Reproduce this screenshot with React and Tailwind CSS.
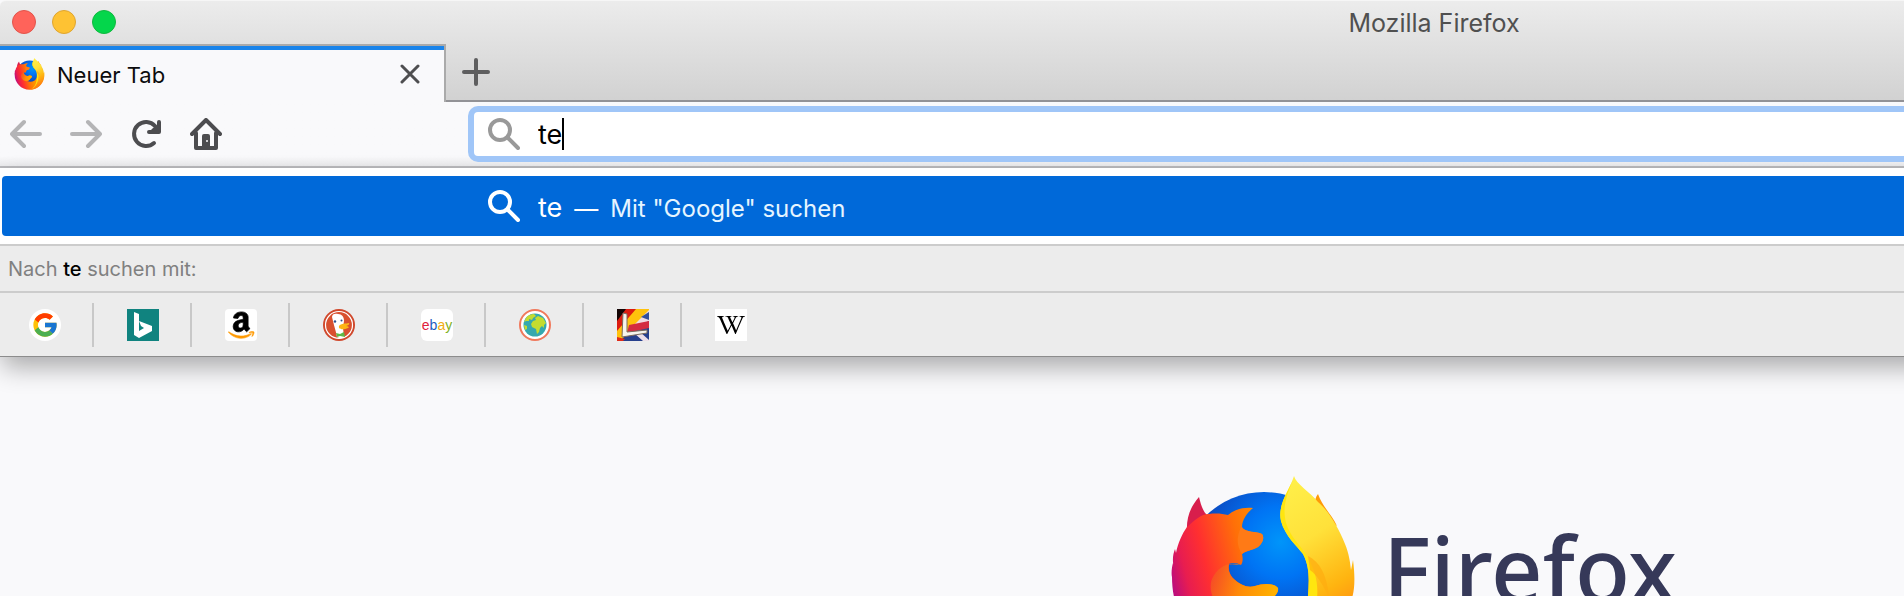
import React, { useState } from "react";
import { FcGoogle } from "react-icons/fc";
import { FaWikipediaW } from "react-icons/fa";

const FirefoxLogo = ({ id, className }) => (
  <svg viewBox="0 0 184 196" className={className} aria-hidden="true">
    <defs>
      <radialGradient id={`${id}-globe`} cx="0.6" cy="0.3" r="0.62">
        <stop offset="0" stopColor="#0095fa" />
        <stop offset="0.35" stopColor="#0074f4" />
        <stop offset="0.7" stopColor="#0a50c8" />
        <stop offset="1" stopColor="#2b2f9e" />
      </radialGradient>
      <linearGradient id={`${id}-fox`} x1="0" y1="0.5" x2="0.6" y2="0.36">
        <stop offset="0" stopColor="#b80c80" />
        <stop offset="0.16" stopColor="#e81d50" />
        <stop offset="0.36" stopColor="#ff2f30" />
        <stop offset="0.7" stopColor="#ff7008" />
        <stop offset="1" stopColor="#ff9500" />
      </linearGradient>
      <linearGradient id={`${id}-tail`} x1="0.3" y1="0" x2="0.6" y2="1">
        <stop offset="0" stopColor="#fff04a" />
        <stop offset="0.35" stopColor="#ffe13a" />
        <stop offset="0.65" stopColor="#ffb410" />
        <stop offset="1" stopColor="#ff6a10" />
      </linearGradient>
      <linearGradient id={`${id}-arm`} x1="0" y1="0" x2="1" y2="0.2">
        <stop offset="0" stopColor="#f4452a" />
        <stop offset="0.5" stopColor="#ff8a08" />
        <stop offset="1" stopColor="#ffb000" />
      </linearGradient>
    </defs>
    <circle cx="93" cy="99" r="83" fill={`url(#${id}-globe)`} />
    <path d="M28 21C20 30 15 41 16 56L37 40C32 36 30 29 28 21Z" fill="#d81e4c" />
    <path d="M147 18C144 22 143 27 144 34L166 50C161 39 151 30 147 18Z" fill="#ff9a08" />
    <path
      d="M16 51C24 44 30 38 38 38C46 37 52 38 57 39C64 33 73 31 82 32C76 37 71 44 71 51C75 57 85 55 91 58C94 62 91 68 87 71C82 74 74 75 71 78C72 82 72 86 70 89C67 87 61 86 58 88C57 95 59 100 64 104C70 109 76 112 84 110C92 107 104 107 107 112C108 118 102 121 98 126C92 135 86 140 78 141C98 151 128 145 137 120L180 115C176 160 138 194 92 194C42 194 1 154 1 101C0 98 1 90 2 87L3 92C1 84 2 78 4 73L5 77C7 67 11 58 16 51Z"
      fill={`url(#${id}-fox)`}
    />
    <path d="M70 51C75 57 85 55 91 58C94 62 91 68 87 71C82 74 74 75 71 78C66 70 65 62 70 51Z" fill="#ff7a16" />
    <path
      d="M70 89C58 85 47 90 41 103C37 113 42 127 53 135C64 143 74 143 80 140C88 138 93 133 98 126C102 121 108 118 107 112C104 107 92 107 84 110C76 112 70 109 64 104C59 100 56 93 58 88Z"
      fill={`url(#${id}-arm)`}
    />
    <path
      d="M123 0C125 8 139 16 147 26C158 35 168 53 174 68C178 78 179 85 180 94L182 84C184 99 184 113 181 122C174 165 136 194 92 194C119 185 137 158 137 120C138 105 139 91 132 78C126 70 114 60 110 45C106 28 120 12 123 0Z"
      fill={`url(#${id}-tail)`}
    />
    <path
      d="M123 0C119 14 110 27 115 47C120 63 131 70 137 82C147 99 150 118 141 145C135 164 121 182 104 192C128 177 137 150 137 120C138 105 139 91 132 78C126 70 114 60 110 45C106 28 120 12 123 0Z"
      fill="#ffe60f"
    />
    <path d="M137 80C149 86 156 99 158 121C152 109 146 99 139 94Z" fill="#ffac10" opacity="0.7" />
  </svg>
);

const SearchIcon = ({ className }) => (
  <svg viewBox="0 0 32 32" className={className} fill="none" stroke="currentColor" strokeWidth="4" strokeLinecap="round" aria-hidden="true">
    <circle cx="12" cy="12" r="10" />
    <path d="M19.500 19.500L30 30" />
  </svg>
);

const BingIcon = () => (
  <svg viewBox="0 0 32 32" className="size-8">
    <path d="M0 0H32V32H0Z" fill="#10837f" />
    <path d="M7 3L12 5V22L17 19L14 17L12 12L25 17V22L12 29L7 26Z" fill="#fff" />
  </svg>
);

const AmazonIcon = () => (
  <svg viewBox="0 0 32 32" className="size-8">
    <rect width="32" height="32" rx="4" fill="#fff" />
    <g transform="translate(3 1) scale(0.059)">
      <path d="M257.200 162.700c-48.700 1.800-169.500 15.500-169.500 117.500 0 109.500 138.300 114 183.500 43.200 6.500 10.200 35.400 37.500 45.300 46.800l56.800-56S341 288.900 341 261.400V114.300C341 89 316.500 32 228.700 32 140.700 32 94 87 94 136.300l73.500 6.800c16.300-49.500 54.200-49.500 54.200-49.500 40.700-.1 35.500 29.800 35.500 69.100zm0 86.800c0 80-84.200 68-84.200 17.200 0-47.200 50.500-56.700 84.200-57.800v40.600z" fill="#000" stroke="#000" strokeWidth="12" />
      <path d="M393.200 413c-7.700 10-70 67-174.500 67S34.200 408.500 9.700 379c-6.800-7.700 1-11.300 5.500-8.300C88.500 415.200 203 488.500 387.700 401c7.500-3.700 13.300 2 5.500 12zm39.800 2.200c-6.500 15.800-16 26.800-21.200 31-5.500 4.500-9.500 2.700-6.500-3.800s19.300-46.500 12.700-55c-6.500-8.300-37-4.300-48-3.200-10.800 1-13 2-14-.3-2.300-5.700 21.700-15.500 37.500-17.500 15.700-1.800 41-.8 46 5.700 3.700 5.100 0 27.100-6.500 43.100z" fill="#f90" stroke="#f90" strokeWidth="10" />
    </g>
  </svg>
);

const DuckIcon = () => (
  <svg viewBox="0 0 32 32" className="size-8">
    <circle cx="16" cy="16" r="16" fill="#d0482c" />
    <circle cx="16" cy="16" r="13.500" fill="#d9502f" stroke="#fff" strokeWidth="1.200" />
    <path d="M9 8C9 5 12 4 15 5C19 5 21 8 21 12L20 19L21 28C18 30 15 29 14 28C13 22 11 17 10 12Z" fill="#fff" />
    <circle cx="12" cy="12.500" r="1.200" fill="#2d4f8e" />
    <circle cx="18.500" cy="11.500" r="1" fill="#2d4f8e" />
    <path d="M16 17C18 14 23 15 26 14C27 15 25 17 22 17C25 17 27 18 25 19C21 21 15 21 16 17Z" fill="#fdb515" />
    <path d="M13 24L17 25L21 23L22 28L17 27L14 28Z" fill="#5fb846" />
  </svg>
);

const EbayIcon = () => (
  <span className="flex size-8 items-center justify-center rounded-md bg-white font-['Liberation_Sans'] text-[14px] leading-none">
    <span className="text-[#e0203a]">e</span>
    <span className="text-[#1c5cc0]">b</span>
    <span className="text-[#f0ac10]">a</span>
    <span className="text-[#7fb020]">y</span>
  </span>
);

const EcosiaIcon = () => (
  <svg viewBox="0 0 32 32" className="size-8">
    <circle cx="16" cy="16" r="15" fill="#fff" stroke="#f0795c" strokeWidth="2" />
    <circle cx="16" cy="16" r="11.500" fill="#36a8ae" />
    <path d="M7 9C9 6 12 5 15 5L17 7L14 9L13 11L10 10L10 12L7 12L5 13Z" fill="#c4dc30" />
    <path d="M5 16L8 17L8 20L6 21Z" fill="#c4dc30" />
    <path d="M12 15L14 12L17 11L16 9L19 7L24 9L27 14L25 16L25 19L23 17L21 19L20 23L18 25L17 20L13 18Z" fill="#c4dc30" />
  </svg>
);

const LeoIcon = () => (
  <svg viewBox="0 0 32 32" className="size-8">
    <path d="M0 0H32V32H0Z" fill="#27408c" />
    <path d="M0 0H18L0 22Z" fill="#140505" />
    <path d="M9 0H24L0 25V12Z" fill="#dc1c10" />
    <path d="M19 0H32V3L3 32H0V22Z" fill="#ffc20c" />
    <path d="M13 20L32 1V12Z" fill="#f1dce2" />
    <path d="M24 8L32 3V11Z" fill="#34509c" />
    <path d="M12 16L32 12V19L10 24Z" fill="#d42c40" />
    <path d="M17 24L23 23L32 31V32H26Z" fill="#ecdfe8" />
    <path d="M0 28L8 30L6 32H0Z" fill="#e02b18" />
    <path d="M6 4L10 5L10 23L30 21V24L5 28Z" fill="#f6f4ec" stroke="#7b6a5c" strokeWidth="1" />
  </svg>
);

const engines = [
  {
    name: "Google",
    icon: (
      <span className="flex size-8 items-center justify-center rounded-full bg-white">
        <FcGoogle size={28} />
      </span>
    ),
  },
  { name: "Bing", icon: <BingIcon /> },
  { name: "Amazon.de", icon: <AmazonIcon /> },
  { name: "DuckDuckGo", icon: <DuckIcon /> },
  { name: "eBay", icon: <EbayIcon /> },
  { name: "Ecosia", icon: <EcosiaIcon /> },
  { name: "LEO Eng-Deu", icon: <LeoIcon /> },
  {
    name: "Wikipedia (de)",
    icon: (
      <span className="flex size-8 items-center justify-center bg-white text-black">
        <FaWikipediaW size={28} />
      </span>
    ),
  },
];

const TitleBar = () => (
  <div className="flex h-11 items-center">
    <div className="flex w-[964px] shrink-0 gap-4 pl-3">
      <button type="button" aria-label="Schließen" className="size-6 rounded-full border border-[#e2544b] bg-[#ff635a]" />
      <button type="button" aria-label="Minimieren" className="size-6 rounded-full border border-[#dfa530] bg-[#fec233]" />
      <button type="button" aria-label="Maximieren" className="size-6 rounded-full border border-[#10b83f] bg-[#04d64b]" />
    </div>
    <h1 className="flex-1 pt-[2px] text-center text-[25px] leading-8 text-[#505050]">Mozilla Firefox</h1>
  </div>
);

const TabBar = () => (
  <div className="flex h-[58px]">
    <div className="flex w-[446px] flex-col border-t-2 border-r-2 border-[#aaaaaa] bg-[#f9f9fb]">
      <div className="h-1 bg-[#1a84ea]" />
      <div className="flex flex-1 items-center pr-6 pb-1 pl-[14px]">
        <FirefoxLogo id="tab" className="h-8 w-[31px]" />
        <span className="ml-3 flex-1 pt-[2px] text-[22px] leading-8 text-[#0c0c0d]">Neuer Tab</span>
        <button type="button" aria-label="Tab schließen" className="text-[#4e4e50]">
          <svg viewBox="0 0 20 20" className="size-5" fill="none" stroke="currentColor" strokeWidth="3" strokeLinecap="round">
            <path d="M2 2L18 18M18 2L2 18" />
          </svg>
        </button>
      </div>
    </div>
    <div className="flex flex-1 items-center border-b-2 border-[#929296] pl-4">
      <button type="button" aria-label="Neuer Tab" className="text-[#5e5e5f]">
        <svg viewBox="0 0 28 28" className="size-7" fill="none" stroke="currentColor" strokeWidth="4" strokeLinecap="round">
          <path d="M14 2V26M2 14H26" />
        </svg>
      </button>
    </div>
  </div>
);

const NavBar = ({ query, setQuery }) => (
  <div className="flex h-[66px] items-center border-b-2 border-[#b9b9bc] bg-linear-to-b from-[#f9f9fb] from-85% to-[#ebebed]">
    <div className="flex w-[468px] shrink-0 items-center gap-7 pl-[10px] text-[#4c4c4f]">
      <button type="button" aria-label="Zurück" disabled className="text-[#b4b4b6]">
        <svg viewBox="0 0 32 32" className="size-8" fill="none" stroke="currentColor" strokeWidth="4" strokeLinecap="round" strokeLinejoin="round">
          <path d="M30 16H2M14 4L2 16L14 28" />
        </svg>
      </button>
      <button type="button" aria-label="Vor" disabled className="text-[#b4b4b6]">
        <svg viewBox="0 0 32 32" className="size-8" fill="none" stroke="currentColor" strokeWidth="4" strokeLinecap="round" strokeLinejoin="round">
          <path d="M2 16H30M18 4L30 16L18 28" />
        </svg>
      </button>
      <button type="button" aria-label="Neu laden">
        <svg viewBox="0 0 32 32" className="size-8" fill="none" stroke="currentColor" strokeWidth="4" strokeLinecap="round" strokeLinejoin="round">
          <path d="M24 25A12 12 0 1 1 25 8" />
          <path d="M29 4V14H19" />
          <path d="M23 10L29 5V14H19Z" fill="currentColor" stroke="none" />
        </svg>
      </button>
      <button type="button" aria-label="Startseite">
        <svg viewBox="0 0 32 32" className="size-8" fill="none" stroke="currentColor" strokeWidth="4" strokeLinecap="round" strokeLinejoin="round">
          <path d="M2 16L16 2L30 16" />
          <path d="M6 15V30H26V15" />
          <path d="M12 30V18Q12 16 14 16H18Q20 16 20 18V30Z" fill="currentColor" stroke="none" />
          <circle cx="17" cy="23" r="1" fill="#f9f9fb" stroke="none" />
        </svg>
      </button>
    </div>
    <label className="flex h-14 flex-1 items-center rounded-l-[10px] border-[6px] border-r-0 border-[#a0c6f8] bg-white pl-[14px]">
      <SearchIcon className="size-8 text-[#999999]" />
      <input
        type="text"
        aria-label="Suchbegriff oder Adresse"
        value={query}
        onChange={(e) => setQuery(e.target.value)}
        className="ml-[18px] field-sizing-content pt-[2px] text-[27px] leading-8 text-black outline-none"
      />
      <span className="h-8 w-[2px] bg-black" />
    </label>
  </div>
);

const Suggestions = ({ query }) => (
  <div className="-mr-10 shadow-[0_12px_24px_-2px_rgba(0,0,0,0.32)]">
    <div className="border-b-2 border-[#cccccc] bg-white py-2 pl-[2px]">
      <button type="button" className="flex h-[60px] w-full items-center rounded-l-[4px] bg-[#0069d9] pl-[486px] text-left text-white">
        <SearchIcon className="size-8 shrink-0" />
        <span className="ml-[18px] flex items-baseline gap-3 pt-1 text-[24px] leading-8">
          <span className="text-[27px]">{query}</span>
          <span>—</span>
          <span className="text-[#e6f5ff]">Mit "Google" suchen</span>
        </span>
      </button>
    </div>
    <div className="border-b-2 border-[#cccccc] bg-[#ececec] px-2 pt-[7px] pb-[6px] text-[20px] leading-8 text-[#808080]">
      Nach <span className="font-medium text-black">{query}</span> suchen mit:
    </div>
    <div className="flex items-center border-b border-[#8c8c8c] bg-[#ececec] pt-[10px] pb-[9px]">
      {engines.map((engine, i) => (
        <button
          key={engine.name}
          type="button"
          aria-label={engine.name}
          className={
            i === 0
              ? "flex h-11 w-[94px] items-center border-r-2 border-[#c8c8c8] pl-[29px]"
              : i === engines.length - 1
              ? "flex h-11 w-[98px] items-center pl-[33px]"
              : "flex h-11 w-[98px] items-center border-r-2 border-[#c8c8c8] pl-[33px]"
          }
        >
          {engine.icon}
        </button>
      ))}
    </div>
  </div>
);

export default function App() {
  const [query, setQuery] = useState("te");

  return (
    <div className="flex h-screen flex-col overflow-hidden bg-[#f9f9fb] font-[Inter,'Liberation_Sans',sans-serif]">
      <header className="shrink-0">
        <div className="rounded-tl-md border-t border-[#f6f6f6] bg-linear-to-b from-[#ececec] to-[#d1d1d1]">
          <div className="-mt-px">
            <TitleBar />
            <TabBar />
          </div>
        </div>
        <NavBar query={query} setQuery={setQuery} />
        <Suggestions query={query} />
      </header>
      <main className="flex shrink-0 justify-center pt-[119px] pl-[944px]">
        <div className="flex items-start gap-7">
          <FirefoxLogo id="main" className="h-[196px] w-[184px]" />
          <span className="pt-8 font-['Noto_Sans',sans-serif] text-[90px] leading-[120px] font-medium text-[#363959]">Firefox</span>
        </div>
      </main>
    </div>
  );
}
